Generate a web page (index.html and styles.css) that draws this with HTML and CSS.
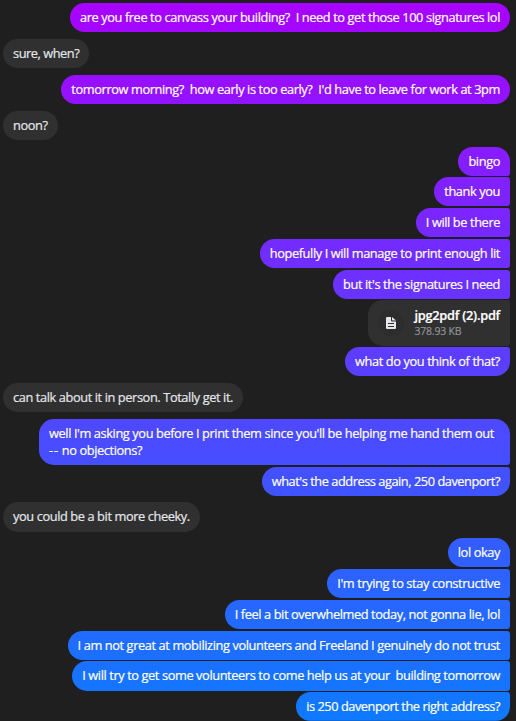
FILE: index.html
```html
<!DOCTYPE html>
<html lang="en">
<head>
    <meta charset="UTF-8">
    <meta name="viewport" content="width=device-width, initial-scale=1.0">
    <title>Chat</title>
    <link rel="stylesheet" href="styles.css">
</head>
<body>

    <div id="chat">
        <div class="group sent">
            <div class="bubble">are you free to canvass your building?  I need to get those 100 signatures lol</div>
        </div>

        <div class="group received">
            <div class="bubble tight">sure, when?</div>
        </div>

        <div class="group sent">
            <div class="bubble">tomorrow morning?  how early is too early?  I'd have to leave for work at 3pm</div>
        </div>

        <div class="group received">
            <div class="bubble">noon?</div>
        </div>

        <div class="group sent">
            <div class="bubble">bingo</div>
            <div class="bubble">thank you</div>
            <div class="bubble">I will be there</div>
            <div class="bubble">hopefully I will manage to print enough lit</div>
            <div class="bubble">but it's the signatures I need</div>
            <div class="bubble file">
                <span class="file-icon">
                    <svg width="10" height="12" viewBox="0 0 10 12">
                        <path fill="#e4e6eb" d="M1 0h4v3.2c0 .8.5 1.3 1.3 1.3H10V11a1 1 0 0 1-1 1H1a1 1 0 0 1-1-1V1a1 1 0 0 1 1-1zM6 0l4 3.6H6.7L6 3z"/>
                        <path stroke="#303030" d="M2 6.5h6M2 9.5h6"/>
                    </svg>
                </span>
                <span class="file-info">
                    <span class="file-name">jpg2pdf (2).pdf</span>
                    <span class="file-size">378.93 KB</span>
                </span>
            </div>
            <div class="bubble">what do you think of that?</div>
        </div>

        <div class="group received">
            <div class="bubble">can talk about it in person. Totally get it.</div>
        </div>

        <div class="group sent">
            <div class="bubble long">well I'm asking you before I print them since you'll be helping me hand them out <span class="dashes">--</span> no objections?</div>
            <div class="bubble tight">what's the address again, 250 davenport?</div>
        </div>

        <div class="group received">
            <div class="bubble">you could be a bit more cheeky.</div>
        </div>

        <div class="group sent">
            <div class="bubble">lol okay</div>
            <div class="bubble">I'm trying to stay constructive</div>
            <div class="bubble">I feel a bit overwhelmed today, not gonna lie, lol</div>
            <div class="bubble">I am not great at mobilizing volunteers and Freeland I genuinely do not trust</div>
            <div class="bubble">I will try to get some volunteers to come help us at your  building tomorrow</div>
            <div class="bubble tight">is 250 davenport the right address?</div>
        </div>
    </div>

</body>
</html>
```
FILE: styles.css
```css
body {
    font-family: 'Open Sans', 'Noto Sans', sans-serif;
    font-size: 12.8px;
    line-height: 17px;
    letter-spacing: -0.4px;
    margin: 0;
    background-color: #1f1f1f;
    color: #fff;
    overflow: hidden;
}

#chat {
    display: flex;
    flex-direction: column;
    gap: 6.7px;
    padding: 3px 6px 0 3px;
}

.group {
    display: flex;
    flex-direction: column;
    gap: 1.6px;
    align-items: flex-start;
}

.sent {
    align-items: flex-end;
}

.bubble {
    box-sizing: border-box;
    min-height: 29.2px;
    padding: 6px 10px;
    border-radius: 15px;
    background-color: #303030;
    color: #e4e6eb;
    white-space: pre-wrap;
    -webkit-text-stroke: 0.2px;
}

.sent .bubble {
    background: linear-gradient(#a802ff, #0e7aff) fixed;
    color: #fff;
}

.sent .bubble:not(:last-child) {
    border-bottom-right-radius: 3px;
}

.sent .bubble:not(:first-child) {
    border-top-right-radius: 3px;
}

/* the end of a run is fully rounded at the bottom */
.sent .bubble:last-child {
    border-bottom-right-radius: 15px;
}

.long {
    width: 471px;
    height: 46px;
}

.tight {
    letter-spacing: -0.46px;
}

.dashes {
    letter-spacing: 0.8px;
}

.sent .file {
    display: flex;
    align-items: center;
    height: 45.2px;
    background: #303030;
}

.file-icon {
    display: flex;
    align-items: center;
    justify-content: center;
    width: 26px;
    height: 26px;
    margin-right: 10px;
    border-radius: 50%;
    background-color: #2d2d2d;
}

.file-info {
    display: flex;
    flex-direction: column;
}

.file-name {
    font-weight: 600;
    letter-spacing: -0.25px;
}

.file-size {
    font-size: 10.5px;
    line-height: 15px;
    letter-spacing: -0.2px;
    color: #8f9195;
}
```
